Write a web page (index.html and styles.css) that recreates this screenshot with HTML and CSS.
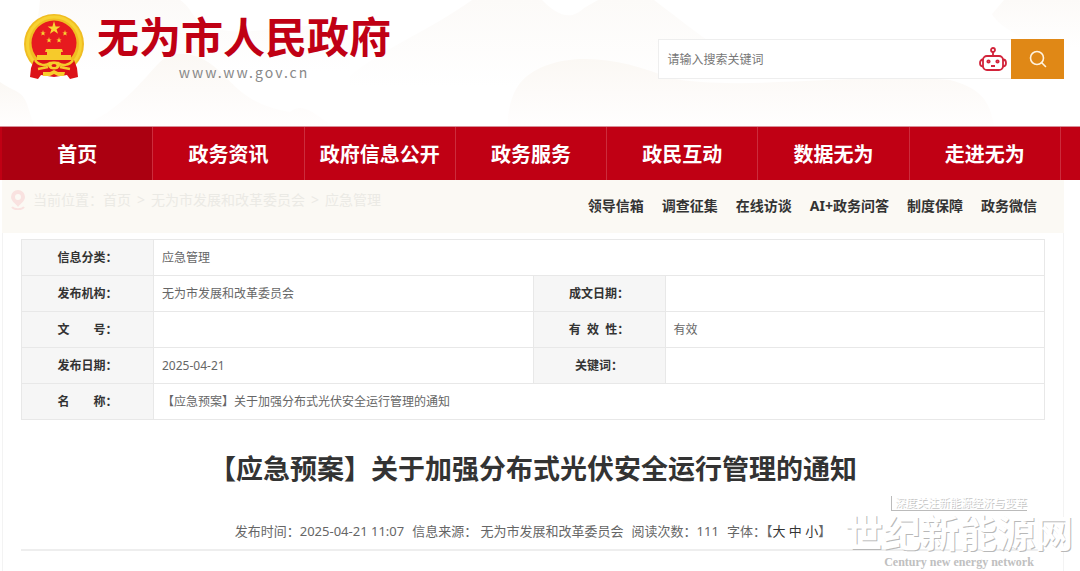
FILE: index.html
```html
<!DOCTYPE html>
<html lang="zh-CN">
<head>
<meta charset="utf-8">
<meta name="viewport" content="width=device-width, initial-scale=1">
<title>【应急预案】关于加强分布式光伏安全运行管理的通知</title>
<link rel="stylesheet" href="styles.css">
</head>
<body>
<header class="header">
  <svg class="hills" viewBox="0 0 1080 126" preserveAspectRatio="none" aria-hidden="true">
    <defs>
      <linearGradient id="hill" x1="0" y1="0" x2="0" y2="1">
        <stop offset="0" stop-color="#fbf8f4"/>
        <stop offset="1" stop-color="#fffefe"/>
      </linearGradient>
      <linearGradient id="haze" x1="0" y1="0" x2="0" y2="1">
        <stop offset="0" stop-color="#fcfaf8"/>
        <stop offset=".8" stop-color="#ffffff"/>
      </linearGradient>
    </defs>
    <path fill="url(#hill)" d="M0 82C14 92 22 90 27 104L34 126H0Z"/>
    <path fill="url(#haze)" d="M40 0H180C192 8 193 20 204 24C250 46 300 10 350 36V90H30Z"/>
    <path fill="url(#hill)" d="M80 126C120 112 142 80 160 62C172 50 192 52 208 62C232 78 240 104 290 112C304 100 318 118 334 126Z"/>
    <path fill="url(#haze)" d="M350 76C380 50 430 30 472 0H542C556 14 570 22 584 8L598 0H654C670 12 690 28 710 42V110H350Z"/>
    <path fill="url(#hill)" d="M508 116C512 90 520 78 540 68C580 50 630 62 670 78C740 92 850 72 950 80C980 88 990 100 994 126H508Z"/>
    <path fill="url(#haze)" d="M1004 0H1080V60C1040 48 1000 30 992 14Z"/>
  </svg>
  <a class="brand" href="#">
    <svg class="emblem" viewBox="0 0 60 66" aria-hidden="true">
      <ellipse cx="30" cy="30" rx="30" ry="30" fill="#f0bd22"/>
      <ellipse cx="30" cy="30" rx="26.500" ry="27" fill="none" stroke="#f7d232" stroke-width="3"/>
      <circle cx="30" cy="29" r="22.500" fill="#e71a1f"/>
      <path fill="#f8d633" d="M30 7L31.600 12.400H36.400L32.600 15.200L34 19.800L30 17L26 19.800L27.400 15.200L23.600 12.400H28.400Z"/>
      <g fill="#f8d633">
        <path id="star" d="M19 16L19.700 18.400H21.700L20.100 19.600L20.700 21.600L19 20.400L17.300 21.600L17.900 19.600L16.300 18.400H18.300Z"/>
        <use href="#star" x="22"/>
        <use href="#star" x="6" y="7"/>
        <use href="#star" x="16" y="7"/>
      </g>
      <path fill="#f6ca2b" d="M22 35H38L39 38H37V41H47V46H13V41H23V38H21Z"/>
      <path fill="#dc1219" d="M10 46H50L53 54L54 63L46 65L43 61L30 63L17 61L14 65L6 63L7 54Z"/>
      <path fill="none" stroke="#f5c92b" stroke-width="2.500" d="M11 46C15 52 22 52 26 49H34C38 52 45 52 49 46M14 55L24 53M46 55L36 53"/>
      <ellipse cx="30" cy="51.500" rx="6" ry="4" fill="#f7ce2c"/>
      <ellipse cx="30" cy="51.500" rx="2.500" ry="1.500" fill="#dc1219"/>
      <path fill="#f7ce2c" d="M19 58H26L30 56L34 58H41L40 62H34L30 60L26 62H19Z"/>
    </svg>
    <span class="brand-text">
      <span class="brand-name">无为市人民政府</span>
      <span class="brand-url">www.ww.gov.cn</span>
    </span>
  </a>
  <form class="search" role="search">
    <input class="search-input" type="text" placeholder="请输入搜索关键词" aria-label="请输入搜索关键词">
    <a class="robot" href="#" aria-label="智能问答">
      <svg viewBox="0 0 28 24" aria-hidden="true" fill="none" stroke="#d2233a" stroke-width="1.800">
        <circle cx="14" cy="3" r="2"/><path d="M14 5V9"/>
        <rect x="4" y="9" width="20" height="14" rx="4"/>
        <path d="M4 12.500C0 12.500 0 19.500 4 19.500M24 12.500C28 12.500 28 19.500 24 19.500M12 19H16"/>
        <circle cx="9.500" cy="14.500" r="1.200"/><circle cx="18.500" cy="14.500" r="1.200"/>
      </svg>
    </a>
    <button class="search-button" type="submit" aria-label="搜索">
      <svg viewBox="0 0 18 18" aria-hidden="true" fill="none" stroke="#fff3df" stroke-width="1.600" stroke-linecap="round"><circle cx="8" cy="8" r="6.500"/><path d="M12.500 12.500L16.500 16.500"/></svg>
    </button>
  </form>
</header>
<nav class="nav">
  <a class="nav-item nav-item-active" href="#">首页</a>
  <a class="nav-item" href="#">政务资讯</a>
  <a class="nav-item" href="#">政府信息公开</a>
  <a class="nav-item" href="#">政务服务</a>
  <a class="nav-item" href="#">政民互动</a>
  <a class="nav-item" href="#">数据无为</a>
  <a class="nav-item" href="#">走进无为</a>
</nav>
<div class="subbar">
  <div class="crumbs">
    <svg class="pin" viewBox="0 0 14 20" aria-hidden="true"><path fill="#f9e2e0" fill-rule="evenodd" d="M7 0A7 7 0 0 1 14 7C14 11 9 14 7 17C5 14 0 11 0 7A7 7 0 0 1 7 0ZM7 4A3 3 0 1 0 7 10A3 3 0 1 0 7 4Z"/><path d="M1 17C3 20 11 20 13 17" fill="none" stroke="#f9e2e0" stroke-width="2"/></svg>
    <span>当前位置：</span><a href="#">首页</a><span class="sep">&gt;</span><a href="#">无为市发展和改革委员会</a><span class="sep">&gt;</span><a href="#">应急管理</a>
  </div>
  <div class="quick">
    <a href="#">领导信箱</a><a href="#">调查征集</a><a href="#">在线访谈</a><a href="#">AI+政务问答</a><a href="#">制度保障</a><a href="#">政务微信</a>
  </div>
</div>
<main class="content">
  <table class="info">
    <colgroup><col class="col-label"><col><col class="col-label"><col></colgroup>
    <tr><th scope="row">信息分类：</th><td colspan="3">应急管理</td></tr>
    <tr><th scope="row">发布机构：</th><td>无为市发展和改革委员会</td><th scope="row">成文日期：</th><td></td></tr>
    <tr><th scope="row">文　　号：</th><td></td><th scope="row">有&nbsp; 效&nbsp; 性：</th><td>有效</td></tr>
    <tr><th scope="row">发布日期：</th><td>2025-04-21</td><th scope="row">关键词：</th><td></td></tr>
    <tr><th scope="row">名　　称：</th><td colspan="3">【应急预案】关于加强分布式光伏安全运行管理的通知</td></tr>
  </table>
  <h1 class="title">【应急预案】关于加强分布式光伏安全运行管理的通知</h1>
  <div class="meta">
    <span>发布时间：2025-04-21 11:07</span>
    <span>信息来源： 无为市发展和改革委员会</span>
    <span>阅读次数：111</span>
    <span class="sizes">字体：【<a href="#">大</a> <a href="#">中</a> <a href="#">小</a>】</span>
  </div>
</main>
<div class="watermark">
  <span class="wm-slogan">深度关注新能源经济与变革</span>
  <span class="wm-name">世纪新能源网</span>
  <span class="wm-en">Century new energy network</span>
</div>
</body>
</html>
```
FILE: styles.css
```css
* { box-sizing: border-box; }
body {
  margin: 0;
  min-height: 100vh;
  display: flex;
  flex-direction: column;
  position: relative;
  overflow-x: hidden;
  background: #fff;
  color: #666;
  font-family: "Noto Sans", "Noto Sans CJK SC", sans-serif;
  font-size: 12px;
}
a { color: inherit; text-decoration: none; }

.header {
  position: relative;
  display: flex;
  justify-content: space-between;
  align-items: flex-start;
  padding: 0 16px 0 24px;
  height: 126px;
}
.hills { position: absolute; inset: 0; width: 100%; height: 100%; }
.brand { position: relative; display: flex; gap: 13px; padding-top: 14px; }
.emblem { width: 60px; height: 66px; }
.brand-text { display: flex; flex-direction: column; align-items: center; }
.brand-name {
  font-family: "Liberation Sans", "Noto Sans CJK SC", sans-serif;
  font-size: 42px;
  line-height: 50px;
  font-weight: 700;
  color: #c00014;
}
.brand-url {
  font-family: "Noto Sans CJK SC", sans-serif;
  font-size: 14px;
  line-height: 16px;
  letter-spacing: 2px;
  color: #888;
}

.search {
  position: relative;
  display: flex;
  width: 39%;
  height: 40px;
  margin-top: 39px;
  background: #fff;
  border: 1px solid #eee;
  border-right: 0;
}
.search-input {
  flex: 1;
  min-width: 0;
  padding: 0 8px;
  border: 0;
  outline: 0;
  background: none;
  font: inherit;
  color: #666;
}
.search-input::placeholder { color: #777; }
.robot { display: flex; align-items: center; padding-right: 4px; }
.robot svg { width: 28px; height: 24px; }
.search-button {
  display: flex;
  align-items: center;
  justify-content: center;
  width: 53px;
  margin: -1px 0;
  padding: 0;
  border: 0;
  background: #e08816;
}
.search-button svg { width: 18px; height: 18px; }

.nav {
  display: flex;
  height: 54px;
  padding: 0 19px 0 2px;
  background: #c00014;
  border-top: 1px solid #d8909a;
}
.nav-item {
  flex: 1;
  border-right: 1px solid #cc2c3c;
  text-align: center;
  font-size: 20px;
  font-weight: 700;
  line-height: 55px;
  color: #fff;
  white-space: nowrap;
}
.nav-item-active { background: #ab0011; }

.subbar {
  display: flex;
  justify-content: space-between;
  align-items: flex-start;
  height: 53px;
  margin: 0 16px 0 2px;
  padding: 0 27px 0 9px;
  background: #fbf9f4;
  font-size: 14px;
  white-space: nowrap;
}
.crumbs { display: flex; align-items: center; line-height: 40px; color: #ebeae5; }
.pin { width: 14px; height: 20px; margin-right: 8px; }
.sep { margin: 0 6px; }
.quick { display: flex; gap: 18px; line-height: 52px; font-weight: 700; color: #333; }

.content {
  flex: 1;
  margin: 0 16px 0 2px;
  padding: 6px 18px 20px;
  border: solid #f3f3f3;
  border-width: 0 1px;
}
.info { width: 100%; table-layout: fixed; border-collapse: collapse; }
.col-label { width: 132px; }
.info th, .info td { height: 36px; padding: 0 8px; border: 1px solid #e8e8e8; line-height: 20px; }
.info th { background: #f6f6f6; color: #333; font-weight: 700; text-align: center; }
.info td { text-align: left; }
.title {
  margin: 29px 0 0;
  text-align: center;
  font-size: 27px;
  line-height: 40px;
  font-weight: 700;
  color: #333;
}
.meta {
  display: flex;
  justify-content: center;
  gap: 8px;
  margin-top: 32px;
  padding-bottom: 8px;
  border-bottom: 2px solid #eee;
  font-size: 13px;
  line-height: 20px;
}
.sizes a { color: #333; }

.watermark {
  position: absolute;
  right: 7px;
  top: 496px;
  display: flex;
  flex-direction: column;
  align-items: center;
  color: #fff;
  white-space: nowrap;
}
.wm-slogan {
  padding-left: 3px;
  border-left: 1px solid #bbb;
  border-bottom: 1px solid #bbb;
  font-family: "Liberation Sans", "Noto Sans CJK SC", sans-serif;
  font-size: 11px;
  line-height: 14px;
  text-shadow: 1px 1px 0 #c4c4c4;
}
.wm-name {
  margin-top: 2px;
  font-family: "Liberation Sans", "Noto Sans CJK SC", sans-serif;
  font-size: 38px;
  line-height: 42px;
  font-weight: 700;
  text-shadow: 1px 1px 0 #b8b8b8;
}
.wm-en {
  font-family: "Liberation Serif", serif;
  font-size: 12px;
  line-height: 14px;
  font-weight: 700;
  color: #c0c0c0;
}
```
